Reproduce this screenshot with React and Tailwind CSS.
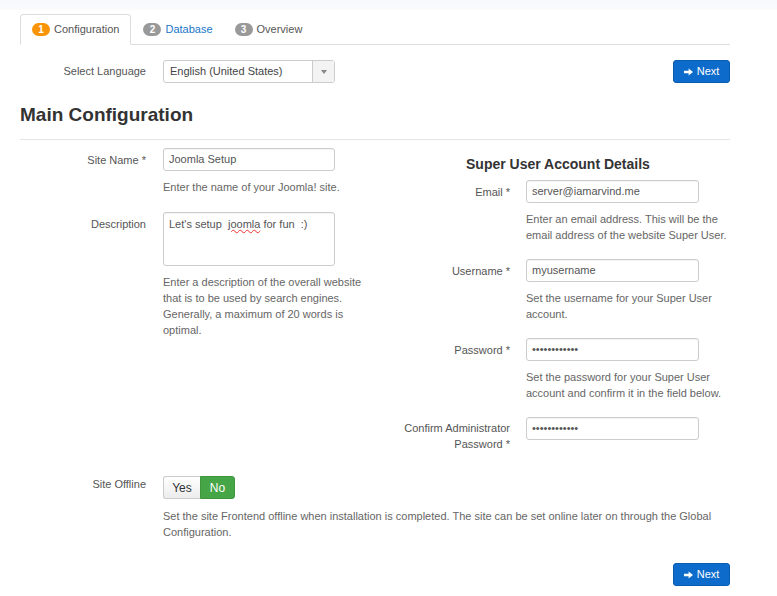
import React from 'react';

const font = { fontFamily: '"Liberation Sans", Arial, sans-serif' };

const ArrowRight = () => (
  <svg width="9" height="8" viewBox="0 0 9 8" className="mr-[4px]">
    <path d="M0 2.8h4.6V0.4L9 4 4.6 7.6V5.2H0z" fill="#fff" />
  </svg>
);

const NextButton = () => (
  <button className="flex items-center justify-center w-[57px] h-[23px] rounded-[3px] bg-[#0c6bcb] border border-[#0a5cae] text-white text-[11px]">
    <ArrowRight />
    Next
  </button>
);

const Badge = ({ n, active }) => (
  <span
    className={`inline-flex items-center justify-center w-[18px] h-[13px] rounded-full text-[10px] font-bold text-white mr-[4px] ${
      active ? 'bg-[#f89406]' : 'bg-[#999]'
    }`}
  >
    {n}
  </span>
);

const TextInput = ({ value, w = 'w-[172px]' }) => (
  <div className={`${w} h-[23px] border border-[#ccc] rounded-[3px] bg-white px-[5px] flex items-center text-[11px] text-[#555] shadow-[inset_0_1px_1px_rgba(0,0,0,0.05)]`}>
    {value}
  </div>
);

const Help = ({ children, className = '' }) => (
  <p className={`mt-[8px] text-[11px] leading-[16px] text-[#666] ${className}`}>{children}</p>
);

const Field = ({ label, labelW = 'w-[126px]', gap = 'gap-[17px]', children, className = '', labelPad = 'pt-[4px]' }) => (
  <div className={`flex ${gap} ${className}`}>
    <div className={`${labelW} shrink-0 text-right text-[11px] leading-[16px] text-[#555] ${labelPad}`}>{label}</div>
    <div className="flex-1 min-w-0">{children}</div>
  </div>
);

export default function App() {
  const dots = '••••••••••••';
  return (
    <div className="w-[777px] h-[596px] bg-white overflow-hidden" style={font}>
      <div className="h-[10px] bg-gradient-to-b from-[#f6f8fb] to-[#fafbfd]" />
      <div className="w-[710px] ml-[20px]">
        {/* Tabs */}
        <div className="mt-[4px] flex h-[31px] border-b border-[#ddd] text-[11px]">
          <div className="flex items-center px-[11px] border border-[#ddd] border-b-transparent rounded-t-[4px] bg-white -mb-px text-[#555]">
            <Badge n="1" active />
            Configuration
          </div>
          <div className="flex items-center px-[12px] text-[#1a76c8]">
            <Badge n="2" />
            Database
          </div>
          <div className="flex items-center px-[10px] text-[#555]">
            <Badge n="3" />
            Overview
          </div>
        </div>

        {/* Language row */}
        <div className="mt-[15px] flex items-center justify-between">
          <div className="flex items-center gap-[17px]">
            <div className="w-[126px] text-right text-[11px] text-[#555]">Select Language</div>
            <div className="w-[172px] h-[23px] border border-[#ccc] rounded-[3px] bg-white flex text-[11px] text-[#444]">
              <div className="flex-1 flex items-center px-[6px]">English (United States)</div>
              <div className="w-[22px] border-l border-[#ccc] bg-[#f3f3f3] flex items-center justify-center">
                <svg width="6" height="4" viewBox="0 0 6 4">
                  <path d="M0 0h6L3 4z" fill="#888" />
                </svg>
              </div>
            </div>
          </div>
          <NextButton />
        </div>

        {/* Heading */}
        <h1 className="mt-[20px] pb-[12px] border-b border-[#e5e5e5] text-[19px] leading-[24px] font-bold text-[#333]">
          Main Configuration
        </h1>

        {/* Columns */}
        <div className="mt-[8px] flex gap-[15px]">
          <div className="w-[347px]">
            <Field label="Site Name *">
              <TextInput value="Joomla Setup" />
              <Help>Enter the name of your Joomla! site.</Help>
            </Field>
            <Field label="Description" className="mt-[17px]">
              <div className="w-[172px] h-[54px] border border-[#ccc] rounded-[3px] bg-white px-[5px] pt-[3px] text-[11px] leading-[16px] text-[#555] whitespace-pre shadow-[inset_0_1px_1px_rgba(0,0,0,0.05)]">
                {"Let's setup  "}
                <span className="underline decoration-wavy decoration-[#e33] decoration-1 underline-offset-1">joomla</span>
                {' for fun  :)'}
              </div>
              <Help>
                Enter a description of the overall website that is to be used by search engines. Generally, a maximum of 20 words is optimal.
              </Help>
            </Field>
          </div>

          <div className="flex-1">
            <h3 className="mt-[6px] ml-[84px] text-[14px] leading-[20px] font-bold text-[#333]">Super User Account Details</h3>
            <Field label="Email *" labelW="w-[128px]" gap="gap-[16px]" className="mt-[6px]">
              <TextInput value="server@iamarvind.me" w="w-[173px]" />
              <Help>Enter an email address. This will be the email address of the website Super User.</Help>
            </Field>
            <Field label="Username *" labelW="w-[128px]" gap="gap-[16px]" className="mt-[16px]">
              <TextInput value="myusername" w="w-[173px]" />
              <Help>Set the username for your Super User account.</Help>
            </Field>
            <Field label="Password *" labelW="w-[128px]" gap="gap-[16px]" className="mt-[16px]">
              <TextInput value={dots} w="w-[173px]" />
              <Help>Set the password for your Super User account and confirm it in the field below.</Help>
            </Field>
            <Field label={<>Confirm Administrator<br />Password *</>} labelW="w-[128px]" gap="gap-[16px]" className="mt-[16px]" labelPad="pt-[3px]">
              <TextInput value={dots} w="w-[173px]" />
            </Field>
          </div>
        </div>

        {/* Site offline */}
        <Field label="Site Offline" className="mt-[24px]" labelPad="pt-0">
          <div className="flex h-[23px] text-[12px]">
            <div className="w-[37px] flex items-center justify-center border border-[#ccc] border-r-0 rounded-l-[3px] bg-gradient-to-b from-white to-[#ececec] text-[#333]">
              Yes
            </div>
            <div className="w-[35px] flex items-center justify-center rounded-r-[3px] bg-[#46a546] border border-[#3f963f] text-white">
              No
            </div>
          </div>
          <Help className="mt-[9px]">
            Set the site Frontend offline when installation is completed. The site can be set online later on through the Global Configuration.
          </Help>
        </Field>

        <div className="mt-[23px] flex justify-end">
          <NextButton />
        </div>
      </div>
    </div>
  );
}
